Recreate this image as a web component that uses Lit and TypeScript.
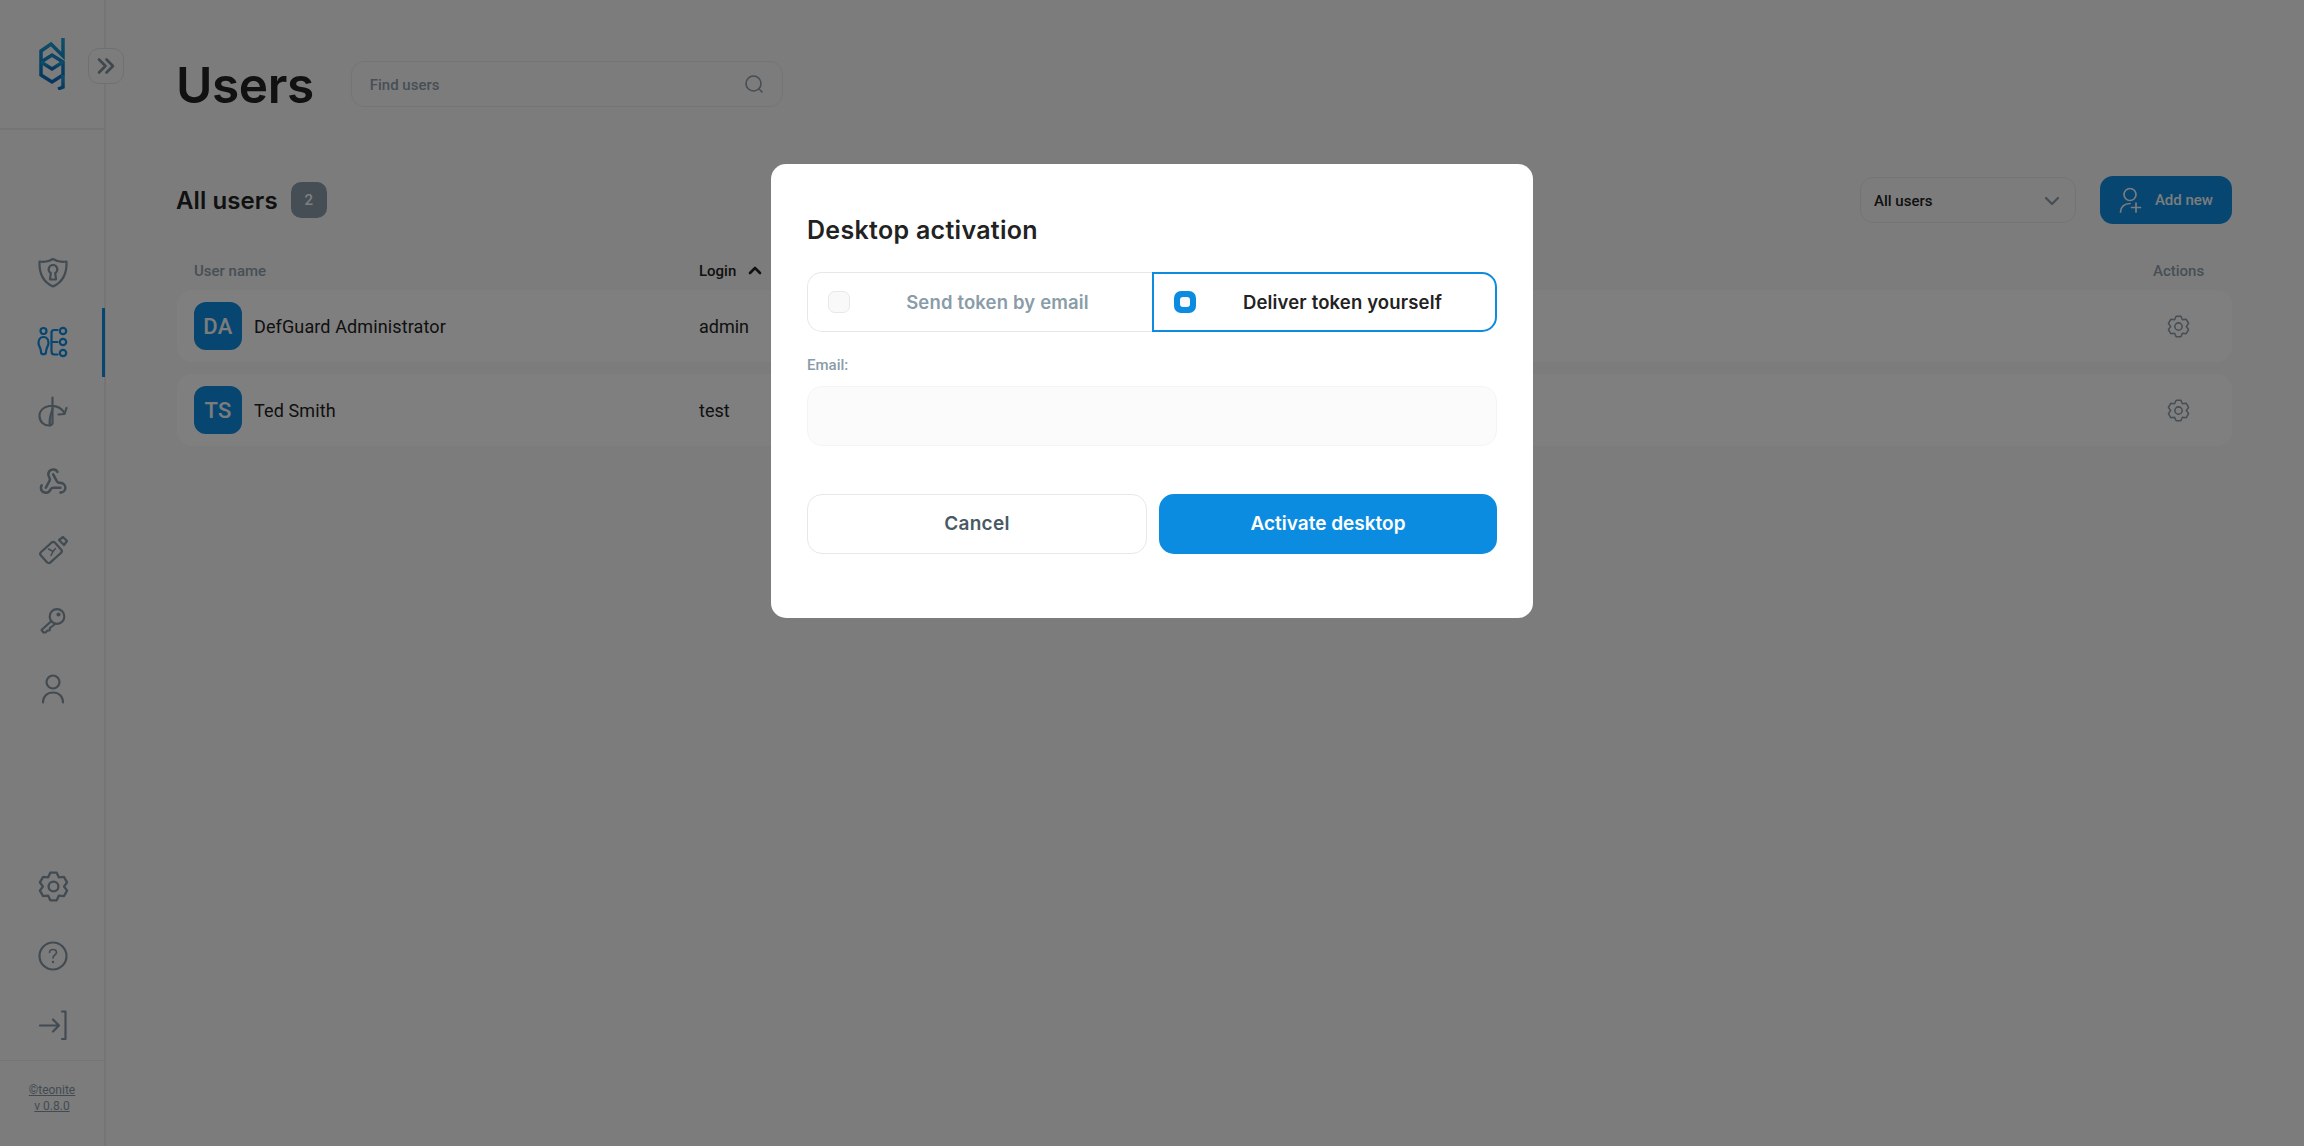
import { LitElement, html, css, svg } from "lit";
import { customElement } from "lit/decorators.js";

function gearPath(): string {
  const pts: string[] = [];
  const R = 11, r = 8.2;
  for (let k = 0; k < 6; k++) {
    const a = -90 + k * 60;
    const p = (deg: number, rad: number) => {
      const t = (deg * Math.PI) / 180;
      return `${(12 + rad * Math.cos(t)).toFixed(2)} ${(12 + rad * Math.sin(t)).toFixed(2)}`;
    };
    pts.push(p(a - 13, R), p(a + 13, R), p(a + 30, r));
  }
  return "M" + pts.join(" L") + " Z";
}

const gear = (w: number, sw: number) => html`<svg width=${w} height=${w} viewBox="0 0 24 24" fill="none" stroke="currentColor" stroke-width=${sw} stroke-linejoin="round"><circle cx="12" cy="12" r="3.8"/><path d=${gearPath()}/></svg>`;

const icon = (body: unknown) => html`<svg width="32" height="32" viewBox="0 0 32 32" fill="none" stroke="currentColor" stroke-width="2.200" stroke-linecap="round" stroke-linejoin="round">${body}</svg>`;

const topIcons = [
  svg`<path d="M2.500 4.500 C7 5.500 12 4.500 16 2 C20 4.500 25 5.500 29.500 4.500 C30 16 26 25 16 29.500 C6 25 2 16 2.500 4.500 Z"/><path d="M16 8 a4.300 4.300 0 0 1 2.200 8 L19 22.500 H13 L13.800 16 A4.300 4.300 0 0 1 16 8 Z"/>`,
  svg`<circle cx="6.500" cy="5" r="3"/><path d="M6.500 11 C3 11 1.500 14 1.500 17 C1.500 20 4 22 4 26 C4 29 9 29 9 26 C9 22 11.500 20 11.500 17 C11.500 14 10 11 6.500 11 Z"/><path d="M20.500 4 H17 Q14.500 4 14.500 7 V25 Q14.500 28.500 17 28.500 H20.500 M14.500 16 H20.500"/><circle cx="26" cy="5" r="3.200"/><circle cx="26" cy="16" r="3.200"/><circle cx="26" cy="27" r="3.200"/>`,
  svg`<path d="M15.500 1.500 V27.500 C15 29 14 29.500 12 29.500 C7 29.500 2.500 26 2.500 20 C2.500 14.500 7 11 12 10 C19 9 24 11 27.500 17"/><path d="M21.500 18.500 L27.500 18 L29.500 12"/><path d="M15.500 13 C13.500 19 11.500 24 13 29.500"/>`,
  svg`<g transform="translate(1.500 1) scale(1.220)" stroke-width="2.100"><path d="M18 16.980h-5.990c-1.100 0-1.950.94-2.480 1.900A4 4 0 0 1 2 17c.01-.7.2-1.400.57-2"/><path d="m6 17 3.130-5.780c.53-.97.1-2.180-.5-3.100a4 4 0 1 1 6.890-4.060"/><path d="m12 6 3.130 5.730C15.660 12.700 16.900 13 18 13a4 4 0 0 1 0 8"/></g>`,
  svg`<rect x="4.500" y="10.500" width="19" height="14" rx="2.500" transform="rotate(-42 14 17.500)"/><path d="M22 5 L26 2 L30 6 L27 10 Z"/><path d="M11.500 14 L16 16.500 L18.500 13.500 M16 16.500 L14 20.500" stroke-width="1.500"/>`,
  svg`<circle cx="20" cy="11.500" r="7.300"/><circle cx="21.500" cy="9.500" r="1" fill="currentColor"/><path d="M14.500 16 L4.500 25 L6.500 27.500 L8.500 27.500 L10.500 25.500 L12.500 25.500 L13 23 L18 19"/>`,
  svg`<circle cx="16" cy="8" r="6.500"/><path d="M6 28.500 C6 22.500 10 18.500 16 18.500 C22 18.500 26 22.500 26 28.500"/>`,
];

@customElement("app-root")
export class AppRoot extends LitElement {
  static styles = css`
    :host { display: block; height: 100vh; background: #f9f9f9; font-family: Roboto, sans-serif; color: #222; overflow: hidden; }
    * { box-sizing: border-box; }
    .page { display: flex; height: 100vh; }
    .side { width: 106px; flex: none; border-right: 2px solid #ebebeb; display: flex; flex-direction: column; position: relative; }
    .logo { height: 130px; flex: none; border-bottom: 2px solid #ebebeb; padding: 38px 0 0 39px; }
    .logo svg { display: block; }
    .expand { position: absolute; left: 88px; top: 48px; width: 36px; height: 36px; border-radius: 11px; background: #f9f9f9; border: 1.5px solid #e0e0e0; display: flex; align-items: center; justify-content: center; color: #7e909c; }
    .nav { margin-top: 108px; }
    .navb { margin-top: 0; }
    .item { height: 69.6px; display: flex; align-items: center; justify-content: center; padding-left: 2px; color: #8496a3; position: relative; }
    .item.active { color: #0c8ce0; }
    .item.active::after { content: ""; position: absolute; right: -1px; top: 0; bottom: 0; width: 3px; background: #0c8ce0; }
    .grow { flex: 1; }
    .foot { height: 86px; flex: none; border-top: 1.5px solid #ebebeb; padding-top: 21px; text-align: center; font-size: 12px; line-height: 16px; color: #8496a3; text-decoration: underline; }
    main { flex: 1; min-width: 0; padding: 61px 72px 0 71px; }
    .head { display: flex; align-items: center; height: 46px; }
    h1 { margin: 1px 37px 0 -1px; font: 600 49.5px/46px Inter, sans-serif; letter-spacing: -0.4px; color: #222; }
    .search { width: 432px; height: 46px; border: 1.5px solid #e8e8e8; border-radius: 13px; display: flex; align-items: center; justify-content: space-between; padding: 0 18px; font-size: 15px; font-weight: 500; color: #8d9fac; }
    .search span { padding-top: 2px; }
    .bar { display: flex; align-items: center; height: 46px; margin-top: 70px; }
    h2 { margin: 2px 13px 0 -1px; font: 600 24px/36px Inter, sans-serif; letter-spacing: 0.1px; color: #222; }
    .badge { width: 36px; height: 36px; border-radius: 10px; background: #899ca8; color: #fff; font-size: 15px; font-weight: 500; display: flex; align-items: center; justify-content: center; }
    .select { margin-left: auto; width: 216px; height: 46px; border: 1.5px solid #e8e8e8; border-radius: 13px; display: flex; align-items: center; justify-content: space-between; padding: 1px 15px 0 13px; font-size: 15px; font-weight: 500; color: #222; }
    .select svg { color: #899ca8; }
    .add { margin-left: 24px; width: 132px; height: 48px; border-radius: 13px; background: #0c8ce0; color: #f9f9f9; font-size: 15px; font-weight: 500; display: flex; align-items: center; padding: 0 19px; justify-content: space-between; }
    .cols { display: grid; grid-template-columns: 505px 1fr 50px; padding: 0 29px 0 17px; align-items: center; }
    .thead { height: 67px; padding-top: 34px; padding-bottom: 6px; font-size: 15px; font-weight: 500; color: #8d9fac; }
    .login { color: #222; display: flex; align-items: center; gap: 12px; }
    .row { height: 72px; border-radius: 15px; background: #fff; margin-bottom: 12px; font-size: 18px; }
    .user { display: flex; align-items: center; gap: 12px; letter-spacing: 0.12px; }
    .av { width: 48px; height: 48px; border-radius: 12px; background: #0c8ce0; color: #f9f9f9; font-size: 22px; font-weight: 500; display: flex; align-items: center; justify-content: center; letter-spacing: 0.3px; }
    .lg { padding-top: 1px; }
    .act { display: flex; justify-content: center; color: #899ca8; }
    .overlay { position: fixed; inset: 0; background: rgba(0,0,0,.5); display: flex; justify-content: center; align-items: flex-start; padding-top: 164px; }
    .modal { width: 762px; height: 454px; background: #fff; border-radius: 15px; padding: 48px 36px 64px; }
    .mt { font: 600 25px/36px Inter, sans-serif; letter-spacing: 0.3px; color: #222; margin-bottom: 0; }
    .toggle { display: flex; margin-top: 24px; height: 60px; font: 600 18.5px/24px Inter, sans-serif; letter-spacing: 0.15px; }
    .opt { flex: 1; display: flex; align-items: center; border: 1.5px solid #e8e8e8; position: relative; padding-left: 20px; }
    .opt span { flex: 1; text-align: center; }
    .opt.a { width: 345px; flex: none; border-radius: 15px 0 0 15px; border-right: 0; color: #899ca8; padding-right: 7px; }
    .opt.b { border: 2px solid #0c8ce0; border-radius: 0 15px 15px 0; color: #222; padding-left: 20px; padding-right: 6px; }
    .chk { width: 22px; height: 22px; border-radius: 7px; background: #f9f9f9; border: 1.5px solid #e8e8e8; flex: none; display: flex; align-items: center; justify-content: center; }
    .chk.on { background: #0c8ce0; border: 0; }
    .chk.on::after { content: ""; width: 10px; height: 10px; border-radius: 3px; background: #f9f9f9; }
    label { display: block; margin-top: 24px; font-size: 15px; line-height: 18px; font-weight: 500; color: #899ca8; }
    .inp { margin-top: 12px; height: 60px; border-radius: 15px; background: #fbfbfb; border: 1.5px solid #f4f4f4; }
    .btns { display: flex; gap: 12px; margin-top: 48px; }
    .btn { flex: 1; height: 60px; border-radius: 15px; display: flex; align-items: center; justify-content: center; font: 600 19px/24px Inter, sans-serif; }
    .cancel { border: 1.5px solid #e8e8e8; color: #485964; letter-spacing: 0.3px; }
    .go { background: #0c8ce0; color: #fff; }
  `;

  private row(i: string, n: string, l: string) {
    return html`<div class="cols row">
      <div class="user"><div class="av">${i}</div><span>${n}</span></div>
      <div class="lg">${l}</div>
      <div class="act">${gear(23, 1.6)}</div>
    </div>`;
  }

  render() {
    return html`<div class="page">
      <aside class="side">
        <div class="logo">
          <svg width="26" height="52" viewBox="0 0 26 52" fill="none" stroke="url(#lg)" stroke-width="3.500" stroke-linejoin="miter">
            <defs><linearGradient id="lg" x1="0" y1="0" x2="0" y2="1"><stop offset="0" stop-color="#1ea0d0"/><stop offset="1" stop-color="#0c6cc0"/></linearGradient></defs>
            <path d="M24 0 V18 L12 6 L2 13 V37 L13 44 L24 37 V24 L13 17 L2 24"/>
            <path d="M2 24 L13 31 L24 24"/>
            <path d="M24 37 V49 L19 51"/>
          </svg>
        </div>
        <div class="expand"><svg width="20" height="20" viewBox="0 0 20 20" fill="none" stroke="currentColor" stroke-width="2.600" stroke-linecap="round" stroke-linejoin="round"><path d="M3 3.500 L9.500 10 L3 16.500 M10.500 3.500 L17 10 L10.500 16.500"/></svg></div>
        <div class="nav">
          ${topIcons.map((b, i) => html`<div class="item ${i === 1 ? "active" : ""}">${icon(b)}</div>`)}
        </div>
        <div class="grow"></div>
        <div class="navb">
          <div class="item">${gear(31, 1.800)}</div>
          <div class="item">${icon(svg`<circle cx="16" cy="16" r="13.500"/><path d="M12.500 12.500 C12.500 8.500 19.500 8.500 19.500 12.500 C19.500 15 16 15 16 18" stroke-width="1.600"/><circle cx="16" cy="22" r=".6" stroke-width="1.200"/>`)}</div>
          <div class="item">${icon(svg`<path d="M3 16.500 H22 M16 10.500 L22 16.500 L16 22.500"/><path d="M25 2.500 H28.500 V30 H25"/>`)}</div>
        </div>
        <div class="foot">©teonite<br />v 0.8.0</div>
      </aside>
      <main>
        <div class="head">
          <h1>Users</h1>
          <div class="search"><span>Find users</span>
            <svg width="20" height="20" viewBox="0 0 20 20" fill="none" stroke="#899ca8" stroke-width="1.600" stroke-linecap="round"><circle cx="9.500" cy="9.500" r="7.500"/><path d="M15 15 L18 18"/></svg>
          </div>
        </div>
        <div class="bar">
          <h2>All users</h2>
          <div class="badge">2</div>
          <div class="select"><span>All users</span>
            <svg width="16" height="10" viewBox="0 0 16 10" fill="none" stroke="currentColor" stroke-width="2.200" stroke-linecap="round" stroke-linejoin="round"><path d="M2 2 L8 8 L14 2"/></svg>
          </div>
          <div class="add">
            <svg width="24" height="26" viewBox="0 0 24 26" fill="none" stroke="currentColor" stroke-width="1.700" stroke-linecap="round"><circle cx="11" cy="7.500" r="6"/><path d="M1.500 25 C1.500 20 5.500 16.500 11 16.500 M17 25 V16 M12.500 20.500 H21.500"/></svg>
            <span>Add new</span>
          </div>
        </div>
        <div class="cols thead">
          <div>User name</div>
          <div class="login"><span>Login</span><svg width="14" height="9" viewBox="0 0 14 9" fill="none" stroke="#222" stroke-width="2.600" stroke-linecap="round" stroke-linejoin="round"><path d="M2 7 L7 2 L12 7"/></svg></div>
          <div>Actions</div>
        </div>
        ${this.row("DA", "DefGuard Administrator", "admin")}
        ${this.row("TS", "Ted Smith", "test")}
      </main>
    </div>
    <div class="overlay">
      <div class="modal">
        <div class="mt">Desktop activation</div>
        <div class="toggle">
          <div class="opt a"><div class="chk"></div><span>Send token by email</span></div>
          <div class="opt b"><div class="chk on"></div><span>Deliver token yourself</span></div>
        </div>
        <label>Email:</label>
        <div class="inp"></div>
        <div class="btns">
          <div class="btn cancel">Cancel</div>
          <div class="btn go">Activate desktop</div>
        </div>
      </div>
    </div>`;
  }
}
